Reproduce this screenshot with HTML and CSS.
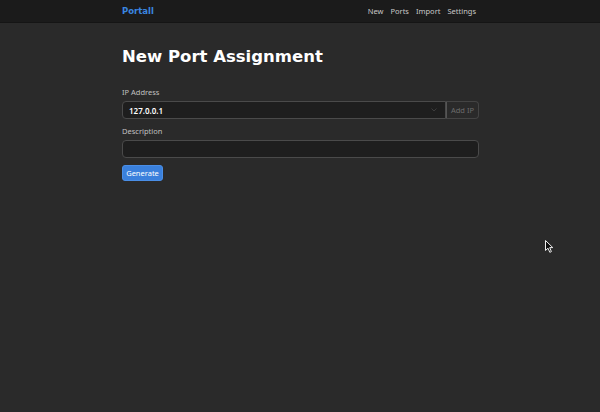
FILE: index.html
```html
<!DOCTYPE html>
<html>
<head>
<meta charset="utf-8">
<link rel="stylesheet" href="styles.css">
</head>
<body>
<nav class="navbar">
  <div class="nav-inner">
    <a class="brand">Portall</a>
    <div class="nav-links">
      <a>New</a>
      <a>Ports</a>
      <a>Import</a>
      <a>Settings</a>
    </div>
  </div>
</nav>
<main class="container">
  <h1 class="title">New Port Assignment</h1>
  <div class="field">
    <label class="label">IP Address</label>
    <div class="input-group">
      <div class="select">
        <span>127.0.0.1</span>
        <svg class="chev" width="6" height="4" viewBox="0 0 6 4"><path d="M0.5 0.5 L3 3 L5.5 0.5" fill="none" stroke="#444" stroke-width="0.8"/></svg>
      </div>
      <button class="addon">Add IP</button>
    </div>
  </div>
  <div class="field">
    <label class="label">Description</label>
    <div class="input"></div>
  </div>
  <button class="btn-primary">Generate</button>
</main>
<svg class="cursor" width="10" height="14" viewBox="0 0 10 14"><path d="M0.5 0.5 L0.5 10.5 L3 8.2 L4.8 12.3 L6.4 11.6 L4.7 7.6 L7.8 7.6 Z" fill="#111" stroke="#eee" stroke-width="1"/></svg>
</body>
</html>
```
FILE: styles.css
```css
* { box-sizing: border-box; }
html, body { margin: 0; padding: 0; }
body {
  background: #2a2a2a;
  font-family: "Noto Sans", "DejaVu Sans", sans-serif;
  color: #e6e6e6;
  height: 412px;
  position: relative;
  overflow: hidden;
}
.navbar {
  background: #1b1b1b;
  height: 23px;
  border-bottom: 1px solid #151515;
}
.nav-inner {
  width: 357px;
  margin-left: 122px;
  height: 100%;
  display: flex;
  align-items: center;
  justify-content: space-between;
}
.brand {
  color: #3a86e0;
  font-family: "DejaVu Sans", sans-serif;
  font-weight: bold;
  font-size: 8.5px;
}
.nav-links {
  display: flex;
  gap: 7px;
  font-size: 7.5px;
  color: #c8c8c8;
  margin-right: 3px;
}
.container {
  width: 357px;
  margin-left: 122px;
  padding-top: 22px;
}
.title {
  margin: 0;
  font-family: "DejaVu Sans", sans-serif;
  font-size: 16.5px;
  font-weight: bold;
  color: #fff;
  line-height: 24px;
}
.field { margin-top: 19px; }
.field + .field { margin-top: 8px; }
.label {
  display: block;
  font-size: 7.5px;
  color: #c0c0c0;
  margin-bottom: 4px;
  line-height: 9px;
}
.input-group {
  display: flex;
  height: 18px;
}
.select {
  flex: 1;
  background: #1e1e1e;
  border: 1px solid #4a4a4a;
  border-radius: 4px 0 0 4px;
  display: flex;
  align-items: center;
  justify-content: space-between;
  padding: 0 8px 0 6px;
  font-size: 8px;
  font-weight: 600;
  color: #fff;
}
.addon {
  width: 33px;
  background: #2a2a2a;
  border: 1px solid #444;
  border-left: 1px solid #555;
  border-radius: 0 4px 4px 0;
  color: #6c6c6c;
  font-family: inherit;
  font-size: 7.5px;
  padding: 0;
}
.input {
  height: 18px;
  background: #1e1e1e;
  border: 1px solid #4a4a4a;
  border-radius: 4px;
}
.btn-primary {
  margin-top: 7px;
  width: 41px;
  height: 16px;
  background: #3a80dc;
  border: 1px solid #4a8ee6;
  border-radius: 3px;
  color: #fff;
  font-family: inherit;
  font-size: 7.5px;
  padding: 0;
}
.cursor {
  position: absolute;
  left: 545px;
  top: 240px;
}
```
